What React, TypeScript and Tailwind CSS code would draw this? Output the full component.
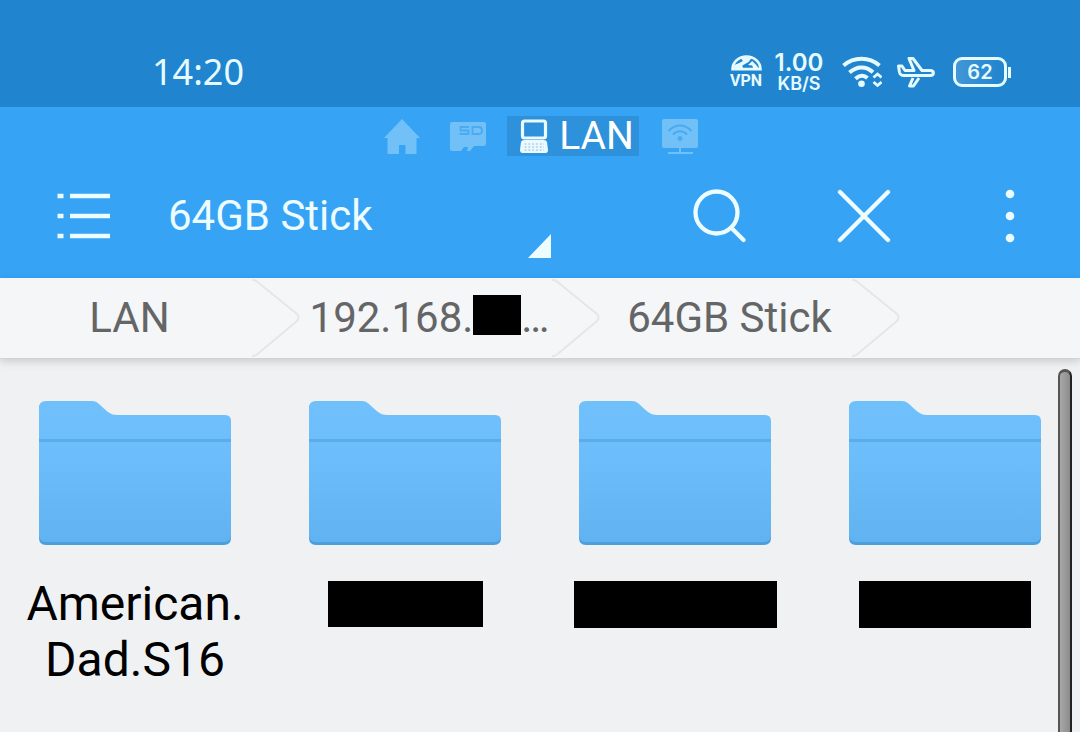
import React from "react";

function StatusBar() {
  return (
    <header className="flex h-[107px] items-end bg-[#2084cf] pb-[15px] pl-[152px] pr-[69px] text-[#e6fbff]">
      <time className="font-['Noto_Sans',sans-serif] text-[36px] leading-[40px]">14:20</time>
      <div className="ml-auto flex h-10 items-center">
        <div className="flex w-8 flex-col items-center">
          <svg className="h-4 w-[31px]" viewBox="0 0 30 15" fill="none" stroke="currentColor" strokeWidth="2.6">
            <path d="M1.500 13.500C1.500 6.500 7.500 1.300 15 1.300S28.500 6.500 28.500 13.500Z" />
            <path d="M9 2L11.500 5.500L8 7.500L3 9.500V14H12L11 10L17 6.500L20.500 2Z" fill="currentColor" stroke="none" />
            <path d="M16.500 9.500L20.500 5.500L24 9L28 14H22L20.500 10Z" fill="currentColor" stroke="none" />
          </svg>
          <span className="mt-px font-['Roboto',sans-serif] text-[16px] font-bold leading-[17px]">VPN</span>
        </div>
        <div className="ml-3 flex w-[50px] flex-col items-center font-['Inter',sans-serif] font-semibold">
          <span className="text-[24px] leading-[24px]">1.00</span>
          <span className="text-[18px] leading-[18px]">KB/S</span>
        </div>
        <svg className="ml-[18px] h-8 w-10" viewBox="0 0 40 32" fill="none" stroke="currentColor" strokeWidth="4">
          <path d="M1.500 9.500C12 .500 27 .500 37.500 9.500" />
          <path d="M7.500 16.500C15 9.800 24 9.800 31 16.200" />
          <path d="M13.500 22.800C17.500 19 22 19 25.500 22" />
          <circle cx="19.500" cy="27.800" r="3.300" fill="currentColor" stroke="none" />
          <path d="M31.500 21.500L35.500 18L39.500 21.500M31.500 26L35.500 29.500L39.500 26" strokeWidth="2.800" />
        </svg>
        <svg className="ml-[14px] h-8 w-10" viewBox="0 0 40 32" fill="none" stroke="currentColor" strokeWidth="3" strokeLinejoin="round">
          <path d="M2.500 10L6 10L9 14.500H18L13 2.500H17L26 14.500H34C38.500 14.500 38.500 19.500 34 19.500H8C5.500 19.500 4 18.500 3.500 16.500Z" />
          <path d="M17 22L13.500 30H17.500L23 22" />
        </svg>
        <div className="ml-[17px] flex items-center">
          <div className="flex h-[30px] w-[54px] items-center justify-center rounded-[9px] border-3 border-current bg-linear-to-r from-white/15 to-transparent font-['Inter',sans-serif] text-[20px] font-semibold leading-none">
            62
          </div>
          <div className="ml-px h-[11px] w-[3px] bg-current" />
        </div>
      </div>
    </header>
  );
}

function LocationTabs() {
  return (
    <nav aria-label="Locations" className="flex h-10 items-center justify-center pl-[2px]">
      <button aria-label="Home" className="text-[#72c0f8]">
        <svg className="size-9" viewBox="0 0 36 36" fill="currentColor">
          <path d="M18 1L36 20H32.500V36H21.500V27H15V36H3.500V20H0Z" />
        </svg>
      </button>
      <button aria-label="SD card" className="ml-[30px] text-[#72c0f8]">
        <svg className="size-9" viewBox="0 0 36 36" fill="currentColor">
          <path d="M2 4H34a2 2 0 0 1 2 2V26a2 2 0 0 1-2 2H24L20 33H17L18 29H14L11 33H2a2 2 0 0 1-2-2V6a2 2 0 0 1 2-2Z" />
          <path d="M19 9H10.500V12.500H18.500V16H9.500M22.500 9H29Q32 9 32 12.500T29 16H22.500Z" fill="none" stroke="#4aabf2" strokeWidth="1.800" />
        </svg>
      </button>
      <button className="ml-[21px] flex h-10 items-center gap-[10px] bg-[#2d91dc] pl-3 pr-[5px] text-[39px] leading-10 text-white">
        <svg className="h-9 w-[30px]" viewBox="0 0 30 36" fill="none">
          <rect x="3.500" y="3" width="23" height="17" rx="2" stroke="#eafaff" strokeWidth="3.200" />
          <path d="M5.500 22H24.500Q27.500 22 28 24L29 32Q29 35 26.500 35H3.500Q1 35 1 32L2 24Q2.500 22 5.500 22Z" fill="#eafaff" />
          <path d="M5.500 26H25M5.500 29H25M5.500 32H25" stroke="#b4cfe6" strokeWidth="1.500" strokeDasharray="2 1.800" />
        </svg>
        LAN
      </button>
      <button aria-label="Network" className="ml-[23px] text-[#72c0f8]">
        <svg className="size-9" viewBox="0 0 36 36" fill="currentColor">
          <rect y="1" width="36" height="29" rx="2" />
          <path d="M18 29V35M6 35H31" stroke="currentColor" strokeWidth="2" />
          <g fill="none" stroke="#4aabf2" strokeWidth="2">
            <path d="M6.500 13C13 5.500 23 5.500 29.500 13" />
            <path d="M11 16.500C15 12 21 12 25 16.500" />
          </g>
          <circle cx="18" cy="20.500" r="2.500" fill="#4aabf2" />
        </svg>
      </button>
    </nav>
  );
}

function Toolbar() {
  return (
    <div className="flex h-[119px] items-center text-[#ecfcff]">
      <button aria-label="Menu" className="flex h-full w-[168px] items-center justify-center">
        <svg className="h-12 w-[54px]" viewBox="0 0 54 48" stroke="currentColor" strokeWidth="4.500">
          <path d="M.500 4H6.500M13 4H53M.500 24H6.500M13 24H53M.500 44H6.500M13 44H53" />
        </svg>
      </button>
      <label className="mr-[97px] flex h-[84px] flex-1">
        <select
          aria-label="Current folder"
          className="min-w-0 flex-1 appearance-none bg-transparent text-[42px] leading-[50px]"
        >
          <option>64GB Stick</option>
        </select>
        <svg className="h-6 w-[23px] self-end" viewBox="0 0 23 24" fill="currentColor">
          <path d="M23 0V24H0Z" />
        </svg>
      </label>
      <button aria-label="Search" className="flex h-full w-36 items-center justify-center">
        <svg className="size-[54px]" viewBox="0 0 54 54" fill="none" stroke="currentColor" strokeWidth="4.300" strokeLinecap="round">
          <circle cx="23.500" cy="23.500" r="21" />
          <path d="M39.500 40L50.500 51" />
        </svg>
      </button>
      <button aria-label="Close" className="flex h-full w-36 items-center justify-center">
        <svg className="size-[54px]" viewBox="0 0 54 54" stroke="currentColor" strokeWidth="4.300" strokeLinecap="round">
          <path d="M3 3L51 51M51 3L3 51" />
        </svg>
      </button>
      <button aria-label="More options" className="flex h-full w-36 items-center justify-center pl-1">
        <svg className="h-[54px] w-3" viewBox="0 0 12 54" fill="currentColor">
          <circle cx="6" cy="5" r="4.300" />
          <circle cx="6" cy="27" r="4.300" />
          <circle cx="6" cy="49" r="4.300" />
        </svg>
      </button>
    </div>
  );
}

function Crumb({ children }: { children: React.ReactNode }) {
  return (
    <li className="flex h-20 w-[300px] items-center">
      <a href="#" className="flex flex-1 items-center justify-center pl-[7px]">
        {children}
      </a>
      <svg className="h-20 w-12" viewBox="0 0 48 80" fill="none" stroke="#e5e6e8" strokeWidth="2">
        <path d="M-2 2H1Q3 2 5 3.500L45 36Q46.500 37.500 46.500 39.500T45 43L5 76.500Q3 78 1 78H-2" />
      </svg>
    </li>
  );
}

function Breadcrumbs() {
  return (
    <nav aria-label="Path" className="relative h-[81px] border-b border-[#d2d3d5] bg-[#f5f6f8] shadow-[0_3px_8px_rgba(0,0,0,0.15)]">
      <ol className="flex text-[42px] leading-[50px] text-[#646567]">
        <Crumb>LAN</Crumb>
        <Crumb>
          192.168.
          <span className="mb-[6px] h-10 w-12 bg-black" />
          …
        </Crumb>
        <Crumb>64GB Stick</Crumb>
      </ol>
    </nav>
  );
}

function FolderIcon() {
  return (
    <svg className="h-[145px] w-48" viewBox="0 0 192 145" aria-hidden="true">
      <defs>
        <linearGradient id="folder" x1="0" y1="0" x2="0" y2="1">
          <stop offset="0" stopColor="#70c0fc" />
          <stop offset="0.400" stopColor="#6cbdfb" />
          <stop offset="1" stopColor="#60b2f1" />
        </linearGradient>
      </defs>
      <path d="M7 3H54C62 3 66 16 78 17H186Q192 17 192 23V138Q192 145 185 145H7Q0 145 0 138V8Q0 3 7 3Z" fill="#4c9fdd" />
      <path d="M7 1H53C62 1 66 15 78 15H186Q192 15 192 21V135Q192 142 185 142H7Q0 142 0 135V8Q0 1 7 1Z" fill="url(#folder)" />
      <rect y="39" width="192" height="3" fill="#59adec" />
    </svg>
  );
}

function Folder({ children }: { children: React.ReactNode }) {
  return (
    <li>
      <button className="flex w-full flex-col items-center px-5">
        <FolderIcon />
        <span className="mt-[31px] flex min-h-[56px] flex-col items-center justify-center text-[48px] leading-[56px] text-black">
          {children}
        </span>
      </button>
    </li>
  );
}

export default function App() {
  return (
    <div className="flex min-h-screen flex-col bg-[#f0f1f3] font-['Roboto',sans-serif]">
      <StatusBar />
      <div className="bg-[#36a3f5] pb-[3px] pt-[9px]">
        <LocationTabs />
        <Toolbar />
      </div>
      <Breadcrumbs />
      <main className="relative flex-1 pt-[41px]">
        <ul className="grid grid-cols-4">
          <Folder>
            American.
            <br />
            Dad.S16
          </Folder>
          <Folder>
            <span className="h-[46px] w-[155px] bg-black" />
          </Folder>
          <Folder>
            <span className="h-[47px] w-[203px] bg-black" />
          </Folder>
          <Folder>
            <span className="h-[47px] w-[172px] bg-black" />
          </Folder>
        </ul>
        <div className="absolute bottom-0 right-2 top-[10px] w-[14px] rounded-t-full border-x-2 border-t-3 border-[#555555] border-r-[#222222] bg-linear-to-r from-[#a8a8a8] to-[#8c8c8c]" />
      </main>
    </div>
  );
}
